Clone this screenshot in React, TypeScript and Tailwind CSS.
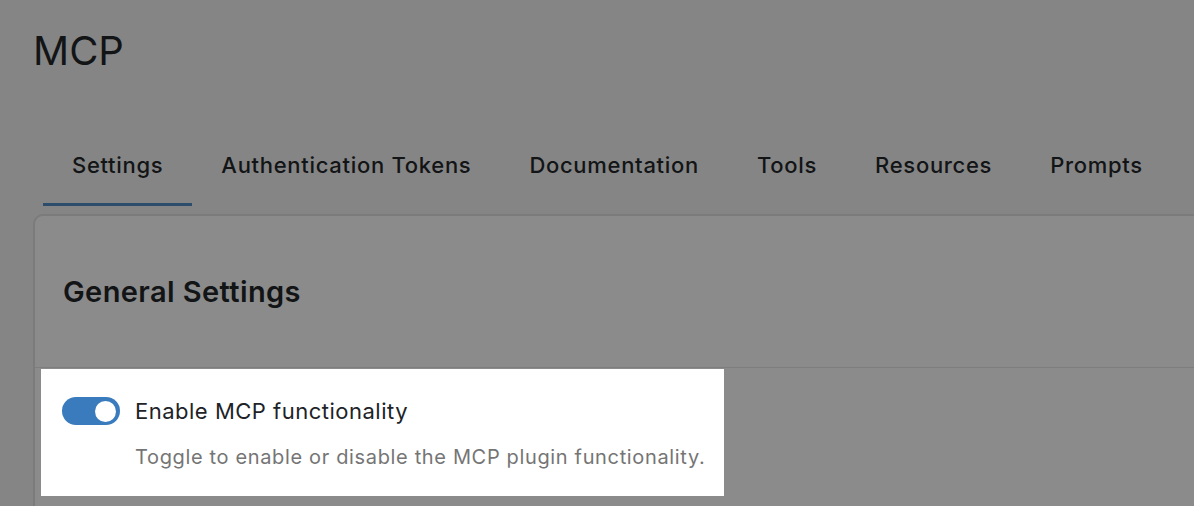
const tabs = ['Settings', 'Authentication Tokens', 'Documentation', 'Tools', 'Resources', 'Prompts']

const Toggle = ({ on }: { on: boolean }) => {
  return (
    <span
      className={
        'flex h-[28px] w-[58px] shrink-0 items-center rounded-full px-[4px] ' +
        (on ? 'justify-end bg-[#3a7bbd]' : 'justify-start bg-[#949494]')
      }
    >
      <span className="h-[21px] w-[21px] rounded-full bg-white" />
    </span>
  )
}

const App = () => {
  return (
    <div
      className="h-[506px] w-[1194px] overflow-hidden bg-[#858585] text-[#121416]"
      style={{ fontFamily: 'Inter, "Noto Sans", sans-serif' }}
    >
      <div className="pl-[33px] pt-[25px]">
        <h1 className="text-[40px] leading-[52px] font-normal">MCP</h1>

        <div className="mt-[66px] ml-[10px] flex">
          {tabs.map((tab, i) => (
            <div
              key={tab}
              className={
                'px-[29px] pt-[8px] pb-[24px] text-[22px] leading-[28px] font-medium tracking-[0.7px] ' +
                (i === 0 ? 'border-b-[3px] border-[#2c4d6c]' : 'border-b-[3px] border-transparent')
              }
            >
              {tab}
            </div>
          ))}
        </div>

        <div className="mt-[8px] mr-[-20px] rounded-tl-[10px] border-t-[2px] border-l-[2px] border-[#7b7b7b] bg-[#8b8b8b]">
          <div className="flex h-[152px] items-center border-b border-[#7e7e7e] pl-[28px]">
            <h2 className="text-[29px] leading-[34px] font-semibold tracking-[0.4px]">General Settings</h2>
          </div>
          <div className="pt-[1px] pb-[20px] pl-[6px]">
            <div className="w-[683px] bg-white px-[21px] pt-[28px] pb-[26px]">
              <div className="flex items-center gap-[15px]">
                <Toggle on />
                <span className="text-[22px] leading-[28px] tracking-[0.5px] text-[#1d2327]">
                  Enable MCP functionality
                </span>
              </div>
              <p className="mt-[19px] pl-[73px] whitespace-nowrap text-[20px] leading-[26px] tracking-[0.65px] text-[#757575]">
                Toggle to enable or disable the MCP plugin functionality.
              </p>
            </div>
          </div>
        </div>
      </div>
    </div>
  )
}

export default App
